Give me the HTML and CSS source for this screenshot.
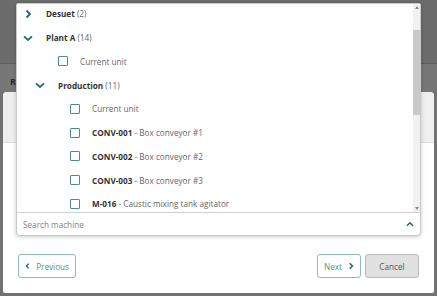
FILE: index.html
```html
<!DOCTYPE html>
<html lang="en">
<head>
  <meta charset="UTF-8" />
  <meta name="viewport" content="width=device-width, initial-scale=1.0"/>
  <title>Replace machine</title>
  <link rel="stylesheet" href="styles.css">
</head>
<body>
  <div class="page">
    <div class="page-top"></div>
    <div class="page-title">R</div>
    <div class="dialog">
      <div class="dialog-head"></div>
      <div class="dialog-foot">
        <button class="btn btn-outline btn-prev">
          <svg class="btn-icon" width="6" height="8" viewBox="0 0 6 8"><path d="M4.3 1.2 L1.6 4 L4.3 6.8" /></svg>
          Previous
        </button>
        <div class="spacer"></div>
        <button class="btn btn-outline btn-next">
          Next
          <svg class="btn-icon" width="6" height="8" viewBox="0 0 6 8"><path d="M1.7 1.2 L4.4 4 L1.7 6.8" /></svg>
        </button>
        <button class="btn btn-grey">Cancel</button>
      </div>
    </div>
  </div>

  <div class="picker">
    <div class="picker-list">
      <div class="tree">
        <div class="row group d0">
          <svg class="chev" width="12" height="12" viewBox="0 0 12 12"><path d="M4.5 2.5 L8 6 L4.5 9.5" /></svg>
          <span class="label"><b>Desuet</b> <span class="muted">(2)</span></span>
        </div>
        <div class="row group d0">
          <svg class="chev" width="12" height="12" viewBox="0 0 12 12"><path d="M2 4.3 L6 8 L10 4.3" /></svg>
          <span class="label"><b>Plant A</b> <span class="muted">(14)</span></span>
        </div>
        <div class="row item d1">
          <span class="check"></span>
          <span class="label muted">Current unit</span>
        </div>
        <div class="row group d1">
          <svg class="chev" width="12" height="12" viewBox="0 0 12 12"><path d="M2 4.3 L6 8 L10 4.3" /></svg>
          <span class="label"><b>Production</b> <span class="muted">(11)</span></span>
        </div>
        <div class="row item d2">
          <span class="check"></span>
          <span class="label muted">Current unit</span>
        </div>
        <div class="row item d2">
          <span class="check"></span>
          <span class="label"><b>CONV-001</b> <span class="muted">- Box conveyor #1</span></span>
        </div>
        <div class="row item d2">
          <span class="check"></span>
          <span class="label"><b>CONV-002</b> <span class="muted">- Box conveyor #2</span></span>
        </div>
        <div class="row item d2">
          <span class="check"></span>
          <span class="label"><b>CONV-003</b> <span class="muted">- Box conveyor #3</span></span>
        </div>
        <div class="row item d2">
          <span class="check"></span>
          <span class="label"><b>M-016</b> <span class="muted">- Caustic mixing tank agitator</span></span>
        </div>
      </div>
      <div class="scrollbar">
        <div class="arrow-up"></div>
        <div class="thumb"></div>
        <div class="arrow-down"></div>
      </div>
    </div>
    <div class="picker-search">
      <span class="placeholder">Search machine</span>
      <svg class="search-chev" width="8" height="6" viewBox="0 0 8 6"><path d="M1 4.8 L4 1.8 L7 4.8" /></svg>
    </div>
  </div>
</body>
</html>
```

FILE: styles.css
```css
body {
  margin: 0;
  width: 437px;
  height: 296px;
  overflow: hidden;
  background-color: #727272;
  font-family: "Open Sans", "Noto Sans", sans-serif;
  font-size: 8.2px;
  color: #333;
}
.page {
  display: flex;
  flex-direction: column;
  height: 296px;
}
.page-top {
  height: 63px;
  background-color: #6c6c6c;
  border-bottom: 1px solid #5f5f5f;
}
.page-title {
  height: 28px;
  padding-left: 10px;
  background-color: #777;
  color: #2a2a2a;
  font-weight: 700;
  font-size: 9px;
  line-height: 36px;
}
.dialog {
  height: 201px;
  margin: 0 3px;
  background-color: white;
  border-radius: 4px 4px 2px 2px;
  display: flex;
  flex-direction: column;
}
.dialog-head {
  height: 50px;
  background-color: #efefef;
  border-bottom: 1px solid #dcdcdc;
  border-radius: 4px 4px 0 0;
}
.dialog-foot {
  margin-top: auto;
  padding: 0 15px 15px;
  display: flex;
  gap: 4px;
}
.spacer {
  flex: 1;
}
.btn {
  height: 24px;
  padding: 0 6px;
  font-family: inherit;
  font-size: 8.2px;
  border-radius: 3px;
  display: flex;
  align-items: center;
  justify-content: center;
  gap: 6px;
  cursor: pointer;
}
.btn-prev {
  width: 58px;
}
.btn-next {
  width: 44px;
}
.btn-outline {
  background-color: white;
  border: 1px solid #8cbdb8;
  color: #4f928c;
}
.btn-grey {
  width: 54px;
  background-color: #e1e1e1;
  border: 1px solid #b9b9b9;
  color: #555;
}
.btn-icon path {
  fill: none;
  stroke: #1f6d67;
  stroke-width: 1.6;
}

/* machine picker popup */
.picker {
  position: absolute;
  top: 3px;
  left: 16px;
  width: 403px;
  background-color: white;
  border: 1px solid #c9c9c9;
  border-radius: 2px 2px 4px 4px;
  box-shadow: 0 1px 4px rgba(0, 0, 0, 0.2);
}
.picker-list {
  height: 208px;
  display: flex;
  overflow: hidden;
}
.tree {
  flex: 1;
  margin-top: -2px;
}
.row {
  height: 23.75px;
  display: flex;
  align-items: center;
  white-space: nowrap;
}
.group.d0 { padding-left: 5px; }
.group.d1 { padding-left: 17px; }
.item.d1 { padding-left: 41px; }
.item.d2 { padding-left: 53px; }
.chev {
  margin-right: 12px;
}
.chev path {
  fill: none;
  stroke: #1f6d67;
  stroke-width: 1.8;
}
.check {
  width: 8px;
  height: 8px;
  border: 1.5px solid #4a8f89;
  border-radius: 1px;
  margin-right: 12px;
}
.label b {
  color: #333;
}
.muted {
  color: #666;
}
.scrollbar {
  width: 7px;
  background-color: #f1f1f1;
  display: flex;
  flex-direction: column;
  align-items: center;
}
.arrow-up, .arrow-down {
  width: 0;
  height: 0;
  border-left: 2.5px solid transparent;
  border-right: 2.5px solid transparent;
}
.arrow-up {
  margin-top: 2px;
  border-bottom: 3px solid #8a8a8a;
}
.thumb {
  width: 7px;
  height: 85px;
  margin-top: 21px;
  background-color: #c9c9c9;
}
.arrow-down {
  margin-top: auto;
  margin-bottom: 2px;
  border-top: 3px solid #8a8a8a;
}
.picker-search {
  height: 22px;
  border-top: 1px solid #cfcfcf;
  display: flex;
  align-items: center;
  padding: 0 6px;
}
.placeholder {
  flex: 1;
  color: #858585;
}
.search-chev path {
  fill: none;
  stroke: #1f6d67;
  stroke-width: 1.6;
}
```
